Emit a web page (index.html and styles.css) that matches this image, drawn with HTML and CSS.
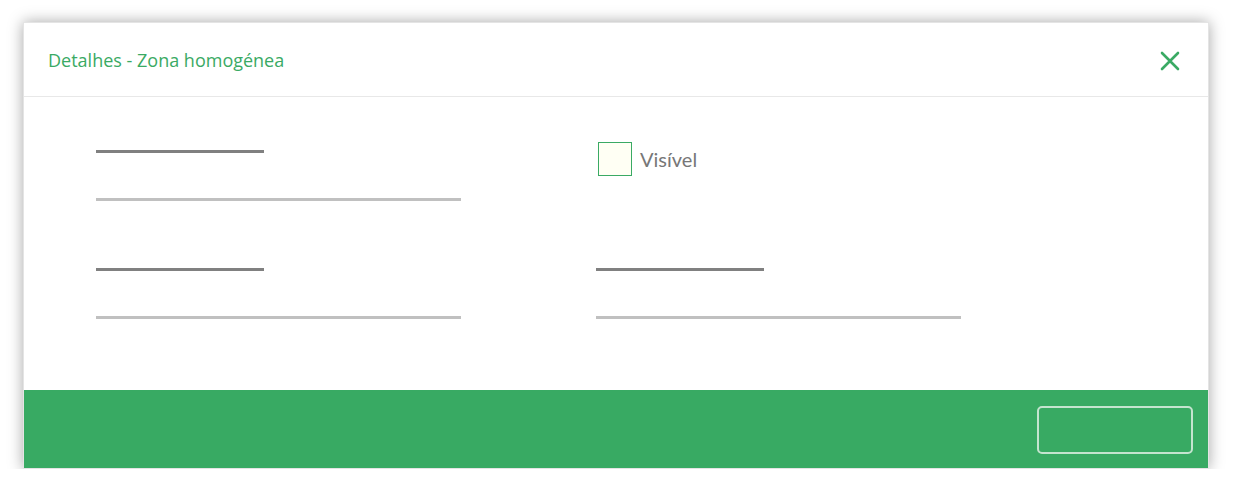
FILE: index.html
```html
<!DOCTYPE html>
<html lang="pt">
<head>
  <meta charset="UTF-8">
  <title>Detalhes - Zona homogénea</title>
  <link rel="stylesheet" href="styles.css">
</head>
<body>
  <div class="modal">
    <div class="modal-header">
      <h1 class="modal-title">Detalhes - Zona homogénea</h1>
      <button class="close-btn" aria-label="Fechar">
        <svg width="20" height="20" viewBox="0 0 20 20">
          <path d="M2 2 L18 18 M18 2 L2 18" stroke="#3aaa64" stroke-width="2.6" stroke-linecap="round"/>
        </svg>
      </button>
    </div>
    <div class="modal-body">
      <div class="field">
        <div class="field-label"></div>
        <div class="field-input"></div>
      </div>
      <label class="check-field">
        <span class="checkbox"></span>
        <span class="check-text">Visível</span>
      </label>
      <div class="field">
        <div class="field-label"></div>
        <div class="field-input"></div>
      </div>
      <div class="field">
        <div class="field-label"></div>
        <div class="field-input"></div>
      </div>
    </div>
    <div class="modal-footer">
      <button class="footer-btn"></button>
    </div>
  </div>
</body>
</html>
```

FILE: styles.css
```css
body {
  font-family: Lato, 'Open Sans', Arial, sans-serif;
  background: #fff;
  margin: 0;
  padding: 0;
}
.modal {
  margin: 22px 0 0 23px;
  width: 1186px;
  box-sizing: border-box;
  border: 1px solid #e4e4e4;
  background: #fff;
  box-shadow: 0 0 14px rgba(0, 0, 0, 0.35);
}
.modal-header {
  height: 73px;
  border-bottom: 1px solid #e8e8e8;
  display: flex;
  align-items: center;
  justify-content: space-between;
  padding: 0 28px 0 24px;
}
.modal-title {
  margin: 0;
  font-family: 'Open Sans', Lato, Arial, sans-serif;
  font-size: 18px;
  font-weight: 400;
  color: #3aaa64;
}
.close-btn {
  background: none;
  border: none;
  padding: 0;
  width: 20px;
  height: 20px;
  cursor: pointer;
  margin-top: 2px;
}
.modal-body {
  height: 293px;
  box-sizing: border-box;
  padding: 53px 0 0 72px;
  display: grid;
  grid-template-columns: 500px 500px;
  grid-auto-rows: 51px;
  row-gap: 67px;
}
.field {
  display: flex;
  flex-direction: column;
}
.field-label {
  width: 168px;
  height: 3px;
  background: #808080;
}
.field-input {
  width: 365px;
  height: 3px;
  margin-top: 45px;
  background: #c0c0c0;
}
.check-field {
  display: flex;
  align-items: center;
  gap: 8px;
  margin: -8px 0 0 2px;
  height: 34px;
}
.checkbox {
  width: 32px;
  height: 32px;
  border: 1px solid #3aaa64;
  background: #fffff4;
}
.check-text {
  font-size: 20px;
  color: #777;
}
.modal-footer {
  height: 78px;
  box-sizing: border-box;
  background: #38aa63;
  display: flex;
  justify-content: flex-end;
  padding: 16px 15px 0 0;
}
.footer-btn {
  width: 156px;
  height: 48px;
  background: transparent;
  border: 2px solid #c4e4cf;
  border-radius: 5px;
  cursor: pointer;
}
```
